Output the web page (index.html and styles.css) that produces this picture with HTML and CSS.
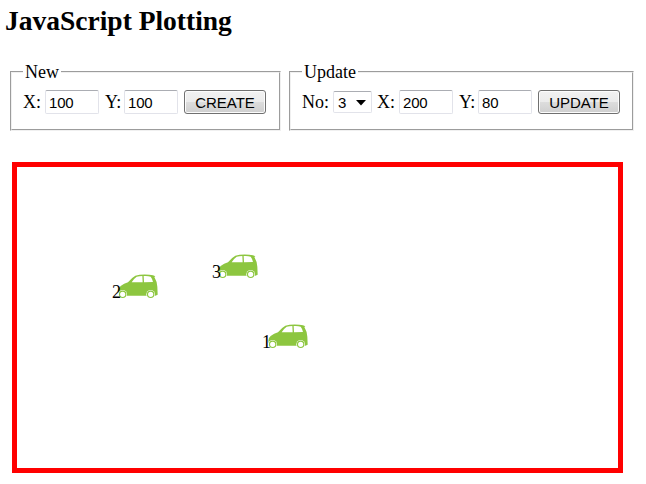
FILE: index.html
```html
<!DOCTYPE html>
<html lang="en">
<head>
<meta charset="utf-8">
<title>JavaScript Plotting</title>
<link rel="stylesheet" href="styles.css">
</head>
<body>
<svg width="0" height="0" class="defs" aria-hidden="true">
  <symbol id="car" viewBox="0 0 120 75">
    <path fill="#8dc63f" d="M2 56Q-1 42 8 36Q18 28 30 25Q42 10 52 5Q68 0 94 2Q107 3 112 7L109 9Q117 22 118 38L119 62L112 65H15Z"/>
    <path fill="#fff" d="M41 25Q48 13 56 8Q64 6 73 6L74 25ZM77 6Q90 5 98 8Q103 14 105 24L78 25Z"/>
    <circle cx="14" cy="61" r="13" fill="#fff"/>
    <circle cx="98" cy="61" r="13" fill="#fff"/>
    <g fill="#fff" stroke="#8dc63f" stroke-width="3.5"><circle cx="14" cy="61" r="9.5"/><circle cx="98" cy="61" r="9.5"/></g>
  </symbol>
</svg>
<h2>JavaScript Plotting</h2>
<form class="controls">
  <fieldset class="new">
    <legend>New</legend>
    <div class="row">
      <label class="x" for="nx">X:</label><input id="nx" value="100">
      <label class="y" for="ny">Y:</label><input id="ny" value="100">
      <button type="button">CREATE</button>
    </div>
  </fieldset>
  <fieldset class="update">
    <legend>Update</legend>
    <div class="row">
      <label class="no" for="no">No:</label>
      <div class="select"><select id="no"><option>3</option></select><svg viewBox="0 0 10 6"><path d="M0 0H10L5 5.5Z"/></svg></div>
      <label class="x" for="ux">X:</label><input id="ux" value="200">
      <label class="y" for="uy">Y:</label><input id="uy" value="80">
      <button type="button">UPDATE</button>
    </div>
  </fieldset>
</form>
<div class="plot">
  <div class="marker" style="left:250px;top:150px"><span>1</span><svg><use href="#car"/></svg></div>
  <div class="marker" style="left:100px;top:100px"><span>2</span><svg><use href="#car"/></svg></div>
  <div class="marker" style="left:200px;top:80px"><span>3</span><svg><use href="#car"/></svg></div>
</div>
</body>
</html>
```
FILE: styles.css
```css
* { box-sizing: border-box; }
body { margin: 0; background: #fff; color: #000; font: 18px/20px "Liberation Serif", serif; overflow: hidden; }
.defs { display: none; }
h2 { margin: 6px 0 0 5px; font-size: 27.5px; line-height: 30px; height: 57px; white-space: nowrap; }
.controls { display: flex; gap: 8px; margin-left: 10px; height: 68px; }
fieldset { margin: 0; padding: 0 0 0 11px; border: 2px groove #f0f0f0; min-width: 0; height: 68px; }
.new { width: 271px; }
.update { width: 345px; }
legend { padding: 0 2px; height: 18px; line-height: 19px; }
.row { display: flex; align-items: center; height: 24px; margin-top: 9px; }
.x { width: 22px; }
.y { width: 19px; }
.no { width: 31px; }
input, select, button { font: 15px "Liberation Sans", sans-serif; color: #000; margin: 0; }
input { width: 54px; height: 24px; margin-right: 6px; padding: 1px 3px; border: 1px solid #e2e3ea; border-top-color: #abadb3; border-radius: 2px; background: #fff; letter-spacing: -.2px; }
button { width: 82px; height: 24px; padding: 0; border: 1px solid #707070; border-radius: 3px; box-shadow: inset 0 0 0 1px #fcfcfc; background: linear-gradient(#f2f2f2, #ebebeb 50%, #ddd 50%, #cfcfcf); }
.select { position: relative; width: 39px; height: 22px; margin-right: 5px; }
select { appearance: none; width: 39px; height: 22px; padding: 0 4px; border: 1px solid #e2e3ea; border-top-color: #abadb3; border-radius: 2px; background: #fff; }
.select svg { position: absolute; left: 23px; top: 9px; width: 10px; height: 6px; }
.plot { position: relative; width: 611px; height: 311px; margin: 31px 0 0 12px; border: 5px solid #f00; }
.marker { position: absolute; width: 41px; height: 25px; }
.marker svg { position: absolute; left: 1px; top: 7px; width: 40px; height: 25px; }
.marker span { position: absolute; left: -5px; top: 15px; z-index: 1; }
```
